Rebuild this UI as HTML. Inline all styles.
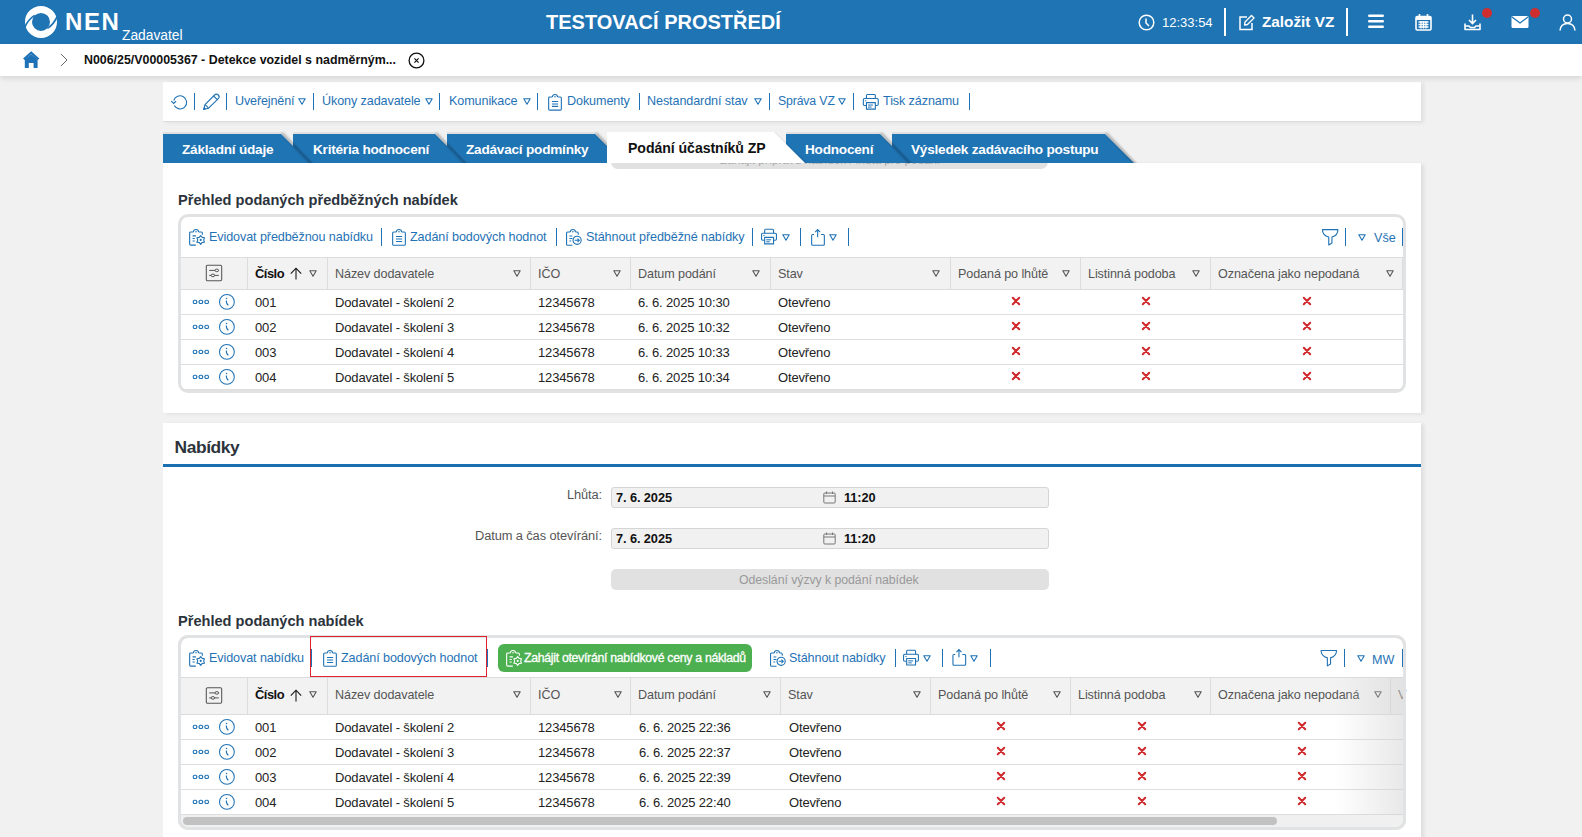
<!DOCTYPE html>
<html><head><meta charset="utf-8">
<style>
*{box-sizing:border-box}
html,body{margin:0;padding:0}
body{width:1582px;height:837px;overflow:hidden;background:#f1f1f1;font-family:"Liberation Sans",sans-serif;position:relative;color:#222}
.a{position:absolute;white-space:nowrap;line-height:1}
</style></head><body>

<div class="a" style="left:0px;top:0px;width:1582px;height:44px;background:#1f74b4;"></div>
<svg class="a" style="left:24px;top:5px;" width="34" height="34" viewBox="24 5 34 34">
<circle cx="41" cy="21.9" r="12.5" fill="none" stroke="#fff" stroke-width="7"/>
<path d="M24.6 27.6 Q28.2 19.4 34.6 15.4" fill="none" stroke="#1f74b4" stroke-width="1.7"/>
<path d="M57.4 16.2 Q53.8 24.4 47.4 28.4" fill="none" stroke="#1f74b4" stroke-width="1.7"/>
</svg>
<div class="a" style="left:65px;top:10px;font-size:24px;font-weight:bold;color:#fff;letter-spacing:1.6px;">NEN</div>
<div class="a" style="left:122px;top:29px;font-size:13.8px;font-weight:normal;color:#fff;">Zadavatel</div>
<div class="a" style="left:546px;top:12px;font-size:20px;font-weight:bold;color:#fff;letter-spacing:0px;">TESTOVACÍ PROSTŘEDÍ</div>
<svg class="a" style="left:1138px;top:14px;" width="17" height="17" viewBox="0 0 17 17"><circle cx="8.5" cy="8.5" r="7.3" fill="none" stroke="#fff" stroke-width="1.5"/><path d="M8 4.5 V9 L11 12" fill="none" stroke="#fff" stroke-width="1.5"/></svg>
<div class="a" style="left:1162px;top:16px;font-size:13px;font-weight:normal;color:#fff;">12:33:54</div>
<div class="a" style="left:1224px;top:8px;width:2px;height:28px;background:#fff;"></div>
<svg class="a" style="left:1238px;top:14px;" width="17" height="17" viewBox="0 0 17 17"><path d="M9 3 H2 V15.5 H14 V9" fill="none" stroke="#fff" stroke-width="1.5"/><path d="M6.5 11 L7 8 L13.5 1.5 L16 4 L9.5 10.5 Z" fill="none" stroke="#fff" stroke-width="1.4" stroke-linejoin="round"/></svg>
<div class="a" style="left:1262px;top:14px;font-size:15.3px;font-weight:bold;color:#fff;">Založit VZ</div>
<div class="a" style="left:1346px;top:8px;width:2px;height:28px;background:#fff;"></div>
<svg class="a" style="left:1368px;top:14px;" width="17" height="15" viewBox="0 0 17 15"><rect x="0" y="0.5" width="16" height="2.6" rx="1.3" fill="#fff"/><rect x="0" y="6" width="16" height="2.6" rx="1.3" fill="#fff"/><rect x="0" y="11.5" width="16" height="2.6" rx="1.3" fill="#fff"/></svg>
<svg class="a" style="left:1415px;top:14px;" width="17" height="17" viewBox="0 0 17 17"><rect x="1" y="2.5" width="15" height="13.5" rx="1.2" fill="none" stroke="#fff" stroke-width="1.6"/><rect x="1" y="3" width="15" height="3" fill="#fff"/><path d="M4.5 0 V4 M12.5 0 V4" stroke="#fff" stroke-width="1.6"/><path d="M3.5 8 H13.5 M3.5 10.5 H13.5 M3.5 13 H13.5" stroke="#fff" stroke-width="1.3"/><path d="M6 7 V14.5 M8.5 7 V14.5 M11 7 V14.5" stroke="#fff" stroke-width="1.3"/></svg>
<svg class="a" style="left:1464px;top:14px;" width="17" height="17" viewBox="0 0 17 17"><path d="M8.5 0.5 V9 M5 6 L8.5 9.5 L12 6" fill="none" stroke="#fff" stroke-width="1.6"/><path d="M1 9.5 V15.5 H16 V9.5 M1 12 H5 L6.5 13.5 H10.5 L12 12 H16" fill="none" stroke="#fff" stroke-width="1.6" stroke-linejoin="round"/></svg>
<div class="a" style="left:1482px;top:8px;width:10px;height:10px;border-radius:50%;background:#cf2e2e"></div>
<svg class="a" style="left:1511px;top:15px;" width="18" height="14" viewBox="0 0 18 14"><rect x="0.5" y="1" width="17" height="12" rx="1.5" fill="#fff"/><path d="M1 2 L9 8 L17 2" fill="none" stroke="#1f74b4" stroke-width="1.3"/></svg>
<div class="a" style="left:1530px;top:8px;width:10px;height:10px;border-radius:50%;background:#cf2e2e"></div>
<svg class="a" style="left:1559px;top:14px;" width="17" height="17" viewBox="0 0 17 17"><circle cx="8.5" cy="5" r="4" fill="none" stroke="#fff" stroke-width="1.5"/><path d="M1 16.5 C1.5 11.5 4.5 9.5 8.5 9.5 C12.5 9.5 15.5 11.5 16 16.5" fill="none" stroke="#fff" stroke-width="1.5"/></svg>
<div class="a" style="left:0;top:44px;width:1582px;height:32px;background:#fff;box-shadow:0 2px 6px rgba(0,0,0,.13);z-index:1"></div>
<div class="a" style="left:0;top:44px;width:1582px;height:32px;z-index:3">
<svg class="a" style="left:23px;top:7px;" width="17" height="18" viewBox="0 0 17 18"><path d="M0.8 8.2 L8.2 1.6 L15.6 8.2" fill="none" stroke="#1f72b5" stroke-width="2.2"/><path d="M1.8 8.2 L8.2 3.2 L14.6 8.2 V17 H10.6 V12 H5.8 V17 H1.8 Z" fill="#1f72b5"/></svg>
<svg class="a" style="left:60px;top:9px;" width="8" height="14" viewBox="0 0 8 14"><path d="M1 1 L7 7 L1 13" fill="none" stroke="#666" stroke-width="1"/></svg>
<div class="a" style="left:84px;top:10px;font-size:12.4px;font-weight:bold;color:#111;">N006/25/V00005367 - Detekce vozidel s nadměrným...</div>
<svg class="a" style="left:408px;top:8px;" width="17" height="17" viewBox="0 0 17 17"><circle cx="8.5" cy="8.5" r="7.4" fill="none" stroke="#111" stroke-width="1.3"/><path d="M6.4 6.4 L10.6 10.6 M10.6 6.4 L6.4 10.6" stroke="#111" stroke-width="1.15"/></svg>
</div>
<div class="a" style="left:163px;top:82px;width:1258px;height:40px;background:#fff;border-bottom:1px solid #dcdcdc;box-shadow:3px 1px 4px rgba(0,0,0,.07)"></div>
<svg class="a" style="left:166px;top:88px;" width="30" height="26" viewBox="166 88 30 26"><path d="M174.3 105.6 A6.6 6.6 0 1 0 173.7 100.6" fill="none" stroke="#1f72b5" stroke-width="1.1"/><path d="M171.3 101.1 L173.7 103.5 L176.1 101.1" fill="none" stroke="#1f72b5" stroke-width="1.2"/></svg>
<div class="a" style="left:194px;top:93px;width:1px;height:17px;background:#1f72b5;"></div>
<svg class="a" style="left:200px;top:88px;" width="26" height="26" viewBox="200 88 26 26"><path d="M203.6 109.5 L205 104.6 L214.6 95 A2.6 2.6 0 0 1 218.3 98.7 L208.6 108.2 Z" fill="none" stroke="#1f72b5" stroke-width="1.1" stroke-linejoin="round"/><path d="M213.6 96 L217.3 99.7 M205 104.6 L208.6 108.2" stroke="#1f72b5" stroke-width="1.1"/><path d="M203.4 109.7 L204.2 106.9 L206.2 108.9 Z" fill="#1f72b5"/></svg>
<div class="a" style="left:226px;top:93px;width:1px;height:17px;background:#1f72b5;"></div>
<div class="a" style="left:235px;top:95px;font-size:12.6px;font-weight:normal;color:#1f72b5;letter-spacing:-0.15px;">Uveřejnění</div>
<svg class="a" style="left:298px;top:98px;" width="8" height="7" viewBox="0 0 8 7"><path d="M0.8 0.8 H7.2 L4 6.2 Z" fill="none" stroke="#1f72b5" stroke-width="1.1" stroke-linejoin="round"/></svg>
<div class="a" style="left:313px;top:93px;width:1px;height:17px;background:#1f72b5;"></div>
<div class="a" style="left:322px;top:95px;font-size:12.6px;font-weight:normal;color:#1f72b5;letter-spacing:-0.1px;">Úkony zadavatele</div>
<svg class="a" style="left:425px;top:98px;" width="8" height="7" viewBox="0 0 8 7"><path d="M0.8 0.8 H7.2 L4 6.2 Z" fill="none" stroke="#1f72b5" stroke-width="1.1" stroke-linejoin="round"/></svg>
<div class="a" style="left:439px;top:93px;width:1px;height:17px;background:#1f72b5;"></div>
<div class="a" style="left:449px;top:95px;font-size:12.6px;font-weight:normal;color:#1f72b5;letter-spacing:-0.1px;">Komunikace</div>
<svg class="a" style="left:523px;top:98px;" width="8" height="7" viewBox="0 0 8 7"><path d="M0.8 0.8 H7.2 L4 6.2 Z" fill="none" stroke="#1f72b5" stroke-width="1.1" stroke-linejoin="round"/></svg>
<div class="a" style="left:537px;top:93px;width:1px;height:17px;background:#1f72b5;"></div>
<svg class="a" style="left:547px;top:93px" width="15" height="18" viewBox="-1.65 -1.45 15 18"><path d="M3.8 2.5 H1.1 Q0 2.5 0 3.6 V14.6 Q0 15.7 1.1 15.7 H11.6 Q12.7 15.7 12.7 14.6 V3.6 Q12.7 2.5 11.6 2.5 H8.9" fill="none" stroke="#1f72b5" stroke-width="1.1"/><path d="M3.8 2.5 C3.8 0.6 4.9 0 6.35 0 C7.8 0 8.9 0.6 8.9 2.5" fill="none" stroke="#1f72b5" stroke-width="1.1"/><circle cx="6.35" cy="2.3" r="0.75" fill="#1f72b5"/><path d="M3.3 7 H9.5 M3.3 9.45 H9.5 M3.3 11.9 H9.5" stroke="#1f72b5" stroke-width="1.05"/></svg>
<div class="a" style="left:567px;top:95px;font-size:12.6px;font-weight:normal;color:#1f72b5;letter-spacing:-0.1px;">Dokumenty</div>
<div class="a" style="left:639px;top:93px;width:1px;height:17px;background:#1f72b5;"></div>
<div class="a" style="left:647px;top:95px;font-size:12.6px;font-weight:normal;color:#1f72b5;letter-spacing:-0.1px;">Nestandardní stav</div>
<svg class="a" style="left:754px;top:98px;" width="8" height="7" viewBox="0 0 8 7"><path d="M0.8 0.8 H7.2 L4 6.2 Z" fill="none" stroke="#1f72b5" stroke-width="1.1" stroke-linejoin="round"/></svg>
<div class="a" style="left:769px;top:93px;width:1px;height:17px;background:#1f72b5;"></div>
<div class="a" style="left:778px;top:95px;font-size:12.3px;font-weight:normal;color:#1f72b5;letter-spacing:-0.15px;">Správa VZ</div>
<svg class="a" style="left:838px;top:98px;" width="8" height="7" viewBox="0 0 8 7"><path d="M0.8 0.8 H7.2 L4 6.2 Z" fill="none" stroke="#1f72b5" stroke-width="1.1" stroke-linejoin="round"/></svg>
<div class="a" style="left:853px;top:93px;width:1px;height:17px;background:#1f72b5;"></div>
<svg class="a" style="left:862px;top:93px" width="18" height="18" viewBox="-1.35 -1.45 18 18"><path d="M3.1 4 V1 Q3.1 0 4.1 0 H11 Q12 0 12 1 V4" fill="none" stroke="#1f72b5" stroke-width="1.1"/><path d="M3.1 11 H1.2 Q0 11 0 9.8 V5.2 Q0 4 1.2 4 H13.7 Q14.9 4 14.9 5.2 V9.8 Q14.9 11 13.7 11 H12" fill="none" stroke="#1f72b5" stroke-width="1.1"/><path d="M3.1 8.2 H12 V14.7 H3.1 Z" fill="#fff" stroke="#1f72b5" stroke-width="1.1" stroke-linejoin="round"/><path d="M4.7 10.6 H9.6 M4.7 12.6 H8.2" stroke="#1f72b5" stroke-width="1"/><path d="M1.8 6.3 H3" stroke="#1f72b5" stroke-width="1"/></svg>
<div class="a" style="left:883px;top:95px;font-size:12.6px;font-weight:normal;color:#1f72b5;letter-spacing:-0.1px;">Tisk záznamu</div>
<div class="a" style="left:969px;top:93px;width:1px;height:17px;background:#1f72b5;"></div>
<div class="a" style="left:163px;top:163px;width:1258px;height:250px;background:#fff;box-shadow:3px 1px 4px rgba(0,0,0,.08)"></div>
<div class="a" style="left:611px;top:150px;width:437px;height:19px;background:#e1e1e1;border-radius:0 0 7px 7px;overflow:hidden"><div class="a" style="left:109px;top:4px;font-size:11.7px;color:#a8a8a8">Zahájit přípravu nabídek / lhůta pro podání</div></div>
<svg class="a" style="left:0;top:0" width="1582" height="180" viewBox="0 0 1582 180"><defs><filter id="tb" x="-50%" y="-50%" width="200%" height="200%"><feGaussianBlur stdDeviation="1.1"/></filter><clipPath id="tc"><rect x="0" y="120" width="1582" height="43"/></clipPath></defs><polygon points="892,132 1106,132 1137,163 892,163" fill="rgba(0,0,0,0.07)"/><polygon points="892,134 1105,134 1134,163 892,163" fill="#1f74b4"/><path d="M1106.2,133 L1136.2,165" stroke="rgba(0,0,0,0.2)" stroke-width="2.6" filter="url(#tb)" clip-path="url(#tc)"/><polygon points="786,132 881,132 912,163 786,163" fill="rgba(0,0,0,0.07)"/><polygon points="786,134 880,134 909,163 786,163" fill="#1f74b4"/><path d="M881.2,133 L911.2,165" stroke="rgba(0,0,0,0.2)" stroke-width="2.6" filter="url(#tb)" clip-path="url(#tc)"/><polygon points="447,132 596,132 627,163 447,163" fill="rgba(0,0,0,0.07)"/><polygon points="447,134 595,134 624,163 447,163" fill="#1f74b4"/><path d="M596.2,133 L626.2,165" stroke="rgba(0,0,0,0.2)" stroke-width="2.6" filter="url(#tb)" clip-path="url(#tc)"/><polygon points="293,132 436,132 467,163 293,163" fill="rgba(0,0,0,0.07)"/><polygon points="293,134 435,134 464,163 293,163" fill="#1f74b4"/><path d="M436.2,133 L466.2,165" stroke="rgba(0,0,0,0.2)" stroke-width="2.6" filter="url(#tb)" clip-path="url(#tc)"/><polygon points="163,132 282,132 313,163 163,163" fill="rgba(0,0,0,0.07)"/><polygon points="163,134 281,134 310,163 163,163" fill="#1f74b4"/><path d="M282.2,133 L312.2,165" stroke="rgba(0,0,0,0.2)" stroke-width="2.6" filter="url(#tb)" clip-path="url(#tc)"/><polygon points="607,132 775,132 808,163 607,163" fill="rgba(0,0,0,0.06)"/><polygon points="607,132 774,132 805,163 607,163" fill="#fff"/></svg>
<div class="a" style="left:182px;top:143px;font-size:13.6px;font-weight:bold;color:#fff;letter-spacing:-0.22px;">Základní údaje</div>
<div class="a" style="left:313px;top:143px;font-size:13.6px;font-weight:bold;color:#fff;letter-spacing:-0.22px;">Kritéria hodnocení</div>
<div class="a" style="left:466px;top:143px;font-size:13.6px;font-weight:bold;color:#fff;letter-spacing:-0.22px;">Zadávací podmínky</div>
<div class="a" style="left:805px;top:143px;font-size:13.6px;font-weight:bold;color:#fff;letter-spacing:-0.22px;">Hodnocení</div>
<div class="a" style="left:911px;top:143px;font-size:13.6px;font-weight:bold;color:#fff;letter-spacing:-0.22px;">Výsledek zadávacího postupu</div>
<div class="a" style="left:628px;top:141px;font-size:14.1px;font-weight:bold;color:#111;letter-spacing:-0.05px;">Podání účastníků ZP</div>
<div class="a" style="left:178px;top:193px;font-size:14.6px;font-weight:bold;color:#2c333b;">Přehled podaných předběžných nabídek</div>
<div class="a" style="left:178px;top:214px;width:1228px;height:179px;border:3px solid #e1e2e3;border-radius:10px;background:#fff"></div>
<svg class="a" style="left:188px;top:228px" width="18" height="18" viewBox="-1.65 -1.45 18 18"><path d="M3.8 2.5 H1.1 Q0 2.5 0 3.6 V14.6 Q0 15.7 1.1 15.7 H6.2" fill="none" stroke="#1f72b5" stroke-width="1.1"/><path d="M8.9 2.5 H11.6 Q12.7 2.5 12.7 3.6 V5.2" fill="none" stroke="#1f72b5" stroke-width="1.1"/><path d="M3.8 2.5 C3.8 0.6 4.9 0 6.35 0 C7.8 0 8.9 0.6 8.9 2.5" fill="none" stroke="#1f72b5" stroke-width="1.1"/><circle cx="6.35" cy="2.3" r="0.75" fill="#1f72b5"/><path d="M2.9 6.4 H6.3 M2.9 9 H5.1 M2.9 11.6 H5.1" stroke="#1f72b5" stroke-width="1.05"/><polygon points="11.05,6.05 12.53,7.90 14.86,8.25 14.00,10.45 14.86,12.65 12.53,13.00 11.05,14.85 9.58,13.00 7.24,12.65 8.10,10.45 7.24,8.25 9.57,7.90" fill="#fff" stroke="#1f72b5" stroke-width="1.1" stroke-linejoin="round"/><circle cx="11.05" cy="10.45" r="1.05" fill="#1f72b5"/></svg>
<div class="a" style="left:209px;top:231px;font-size:12.6px;font-weight:normal;color:#1f72b5;letter-spacing:-0.1px;">Evidovat předběžnou nabídku</div>
<div class="a" style="left:381px;top:228px;width:1px;height:18px;background:#1f72b5;"></div>
<svg class="a" style="left:391px;top:228px" width="15" height="18" viewBox="-1.65 -1.55 15 18"><path d="M3.8 2.5 H1.1 Q0 2.5 0 3.6 V14.6 Q0 15.7 1.1 15.7 H11.6 Q12.7 15.7 12.7 14.6 V3.6 Q12.7 2.5 11.6 2.5 H8.9" fill="none" stroke="#1f72b5" stroke-width="1.1"/><path d="M3.8 2.5 C3.8 0.6 4.9 0 6.35 0 C7.8 0 8.9 0.6 8.9 2.5" fill="none" stroke="#1f72b5" stroke-width="1.1"/><circle cx="6.35" cy="2.3" r="0.75" fill="#1f72b5"/><path d="M3.3 7 H9.5 M3.3 9.45 H9.5 M3.3 11.9 H9.5" stroke="#1f72b5" stroke-width="1.05"/></svg>
<div class="a" style="left:410px;top:231px;font-size:12.6px;font-weight:normal;color:#1f72b5;letter-spacing:-0.1px;">Zadání bodových hodnot</div>
<div class="a" style="left:556px;top:228px;width:1px;height:18px;background:#1f72b5;"></div>
<svg class="a" style="left:565px;top:228px" width="18" height="18" viewBox="-1.55 -1.55 18 18"><path d="M3.8 2.5 H1.1 Q0 2.5 0 3.6 V14.6 Q0 15.7 1.1 15.7 H5.9" fill="none" stroke="#1f72b5" stroke-width="1.1"/><path d="M8.9 2.5 H10.6 Q11.7 2.5 11.7 3.6 V5.2" fill="none" stroke="#1f72b5" stroke-width="1.1"/><path d="M3.8 2.5 C3.8 0.6 4.9 0 6.35 0 C7.8 0 8.9 0.6 8.9 2.5" fill="none" stroke="#1f72b5" stroke-width="1.1"/><circle cx="6.35" cy="2.3" r="0.75" fill="#1f72b5"/><path d="M2.9 6.45 H5.8 M2.9 8.9 H5.8 M2.9 11.35 H4.6" stroke="#1f72b5" stroke-width="1.05"/><circle cx="10.55" cy="10.75" r="4.1" fill="#fff" stroke="#1f72b5" stroke-width="1.1"/><path d="M8.2 10.75 H12.6 M10.9 9 L12.7 10.75 L10.9 12.5" fill="none" stroke="#1f72b5" stroke-width="1.1"/></svg>
<div class="a" style="left:586px;top:231px;font-size:12.6px;font-weight:normal;color:#1f72b5;letter-spacing:-0.1px;">Stáhnout předběžné nabídky</div>
<div class="a" style="left:752px;top:228px;width:1px;height:18px;background:#1f72b5;"></div>
<svg class="a" style="left:760px;top:228px" width="18" height="18" viewBox="-1.55 -1.20 18 18"><path d="M3.1 4 V1 Q3.1 0 4.1 0 H11 Q12 0 12 1 V4" fill="none" stroke="#1f72b5" stroke-width="1.1"/><path d="M3.1 11 H1.2 Q0 11 0 9.8 V5.2 Q0 4 1.2 4 H13.7 Q14.9 4 14.9 5.2 V9.8 Q14.9 11 13.7 11 H12" fill="none" stroke="#1f72b5" stroke-width="1.1"/><path d="M3.1 8.2 H12 V14.7 H3.1 Z" fill="#fff" stroke="#1f72b5" stroke-width="1.1" stroke-linejoin="round"/><path d="M4.7 10.6 H9.6 M4.7 12.6 H8.2" stroke="#1f72b5" stroke-width="1"/><path d="M1.8 6.3 H3" stroke="#1f72b5" stroke-width="1"/></svg>
<svg class="a" style="left:782px;top:234px;" width="8" height="7" viewBox="0 0 8 7"><path d="M0.8 0.8 H7.2 L4 6.2 Z" fill="none" stroke="#1f72b5" stroke-width="1.1" stroke-linejoin="round"/></svg>
<div class="a" style="left:800px;top:228px;width:1px;height:18px;background:#1f72b5;"></div>
<svg class="a" style="left:810px;top:228px" width="16" height="18" viewBox="-1.65 -1.55 16 18"><path d="M2.3 4.9 H1 Q0 4.9 0 5.9 V14.7 Q0 15.7 1 15.7 H11.7 Q12.7 15.7 12.7 14.7 V5.9 Q12.7 4.9 11.7 4.9 H9.4" fill="none" stroke="#1f72b5" stroke-width="1.1"/><path d="M6 0.3 V7.6 M3.5 2.6 L6 0.1 L8.5 2.6" fill="none" stroke="#1f72b5" stroke-width="1.1"/></svg>
<svg class="a" style="left:829px;top:234px;" width="8" height="7" viewBox="0 0 8 7"><path d="M0.8 0.8 H7.2 L4 6.2 Z" fill="none" stroke="#1f72b5" stroke-width="1.1" stroke-linejoin="round"/></svg>
<div class="a" style="left:848px;top:228px;width:1px;height:18px;background:#1f72b5;"></div>
<svg class="a" style="left:1321px;top:228px" width="18" height="18" viewBox="-1.45 -1.65 18 18"><path d="M0 0 H15.5 Q15.5 5.6 9.5 7.3 V13.4 L6.3 15.3 V7.3 Q0 5.6 0 0 Z" fill="none" stroke="#1f72b5" stroke-width="1.1" stroke-linejoin="round"/></svg>
<div class="a" style="left:1345px;top:228px;width:1px;height:18px;background:#1f72b5;"></div>
<svg class="a" style="left:1358px;top:234px;" width="8" height="7" viewBox="0 0 8 7"><path d="M0.8 0.8 H7.2 L4 6.2 Z" fill="none" stroke="#1f72b5" stroke-width="1.1" stroke-linejoin="round"/></svg>
<div class="a" style="left:1374px;top:232px;font-size:12.6px;font-weight:normal;color:#1f72b5;">Vše</div>
<div class="a" style="left:1402px;top:228px;width:1px;height:18px;background:#1f72b5;"></div>
<div class="a" style="left:181px;top:257px;width:1222px;height:32px;background:#f2f2f2;"></div>
<div class="a" style="left:181px;top:257px;width:1222px;height:1px;background:#dcdcdc;"></div>
<div class="a" style="left:181px;top:289px;width:1222px;height:1px;background:#dcdcdc;"></div>
<div class="a" style="left:247px;top:257px;width:1px;height:32px;background:#dcdcdc;"></div>
<div class="a" style="left:327px;top:257px;width:1px;height:32px;background:#dcdcdc;"></div>
<div class="a" style="left:530px;top:257px;width:1px;height:32px;background:#dcdcdc;"></div>
<div class="a" style="left:630px;top:257px;width:1px;height:32px;background:#dcdcdc;"></div>
<div class="a" style="left:770px;top:257px;width:1px;height:32px;background:#dcdcdc;"></div>
<div class="a" style="left:950px;top:257px;width:1px;height:32px;background:#dcdcdc;"></div>
<div class="a" style="left:1080px;top:257px;width:1px;height:32px;background:#dcdcdc;"></div>
<div class="a" style="left:1210px;top:257px;width:1px;height:32px;background:#dcdcdc;"></div>
<div class="a" style="left:1402px;top:257px;width:1px;height:32px;background:#dcdcdc;"></div>
<svg class="a" style="left:205px;top:264px" width="18" height="18" viewBox="-1.00 -1.00 18 18"><rect x="0.3" y="0.3" width="15.4" height="15.4" rx="1.2" fill="none" stroke="#555" stroke-width="1.05"/><path d="M3.2 5.4 H12.6 M3.2 10.4 H12.8" stroke="#555" stroke-width="1"/><ellipse cx="10.8" cy="5.4" rx="1.8" ry="1.3" fill="#f2f2f2" stroke="#555" stroke-width="1"/><ellipse cx="6.9" cy="10.4" rx="1.8" ry="1.3" fill="#f2f2f2" stroke="#555" stroke-width="1"/></svg>
<div class="a" style="left:255px;top:268px;font-size:12.9px;font-weight:bold;color:#111;letter-spacing:-0.5px;">Číslo</div>
<svg class="a" style="left:290px;top:267px;" width="12" height="13" viewBox="0 0 12 13"><path d="M6 12.5 V1.5 M0.8 6.6 L6 1.2 L11.2 6.6" fill="none" stroke="#111" stroke-width="1.05"/></svg>
<svg class="a" style="left:309px;top:270px;" width="8" height="7" viewBox="0 0 8 7"><path d="M0.8 0.8 H7.2 L4 6.2 Z" fill="none" stroke="#555" stroke-width="1.1" stroke-linejoin="round"/></svg>
<div class="a" style="left:335px;top:268px;font-size:12.6px;font-weight:normal;color:#555;letter-spacing:-0.1px;">Název dodavatele</div>
<svg class="a" style="left:513px;top:270px;" width="8" height="7" viewBox="0 0 8 7"><path d="M0.8 0.8 H7.2 L4 6.2 Z" fill="none" stroke="#555" stroke-width="1.1" stroke-linejoin="round"/></svg>
<div class="a" style="left:538px;top:268px;font-size:12.6px;font-weight:normal;color:#555;letter-spacing:-0.1px;">IČO</div>
<svg class="a" style="left:613px;top:270px;" width="8" height="7" viewBox="0 0 8 7"><path d="M0.8 0.8 H7.2 L4 6.2 Z" fill="none" stroke="#555" stroke-width="1.1" stroke-linejoin="round"/></svg>
<div class="a" style="left:638px;top:268px;font-size:12.6px;font-weight:normal;color:#555;letter-spacing:-0.1px;">Datum podání</div>
<svg class="a" style="left:752px;top:270px;" width="8" height="7" viewBox="0 0 8 7"><path d="M0.8 0.8 H7.2 L4 6.2 Z" fill="none" stroke="#555" stroke-width="1.1" stroke-linejoin="round"/></svg>
<div class="a" style="left:778px;top:268px;font-size:12.6px;font-weight:normal;color:#555;letter-spacing:-0.1px;">Stav</div>
<svg class="a" style="left:932px;top:270px;" width="8" height="7" viewBox="0 0 8 7"><path d="M0.8 0.8 H7.2 L4 6.2 Z" fill="none" stroke="#555" stroke-width="1.1" stroke-linejoin="round"/></svg>
<div class="a" style="left:958px;top:268px;font-size:12.6px;font-weight:normal;color:#555;letter-spacing:-0.1px;">Podaná po lhůtě</div>
<svg class="a" style="left:1062px;top:270px;" width="8" height="7" viewBox="0 0 8 7"><path d="M0.8 0.8 H7.2 L4 6.2 Z" fill="none" stroke="#555" stroke-width="1.1" stroke-linejoin="round"/></svg>
<div class="a" style="left:1088px;top:268px;font-size:12.6px;font-weight:normal;color:#555;letter-spacing:-0.1px;">Listinná podoba</div>
<svg class="a" style="left:1192px;top:270px;" width="8" height="7" viewBox="0 0 8 7"><path d="M0.8 0.8 H7.2 L4 6.2 Z" fill="none" stroke="#555" stroke-width="1.1" stroke-linejoin="round"/></svg>
<div class="a" style="left:1218px;top:268px;font-size:12.6px;font-weight:normal;color:#555;letter-spacing:-0.1px;">Označena jako nepodaná</div>
<svg class="a" style="left:1386px;top:270px;" width="8" height="7" viewBox="0 0 8 7"><path d="M0.8 0.8 H7.2 L4 6.2 Z" fill="none" stroke="#555" stroke-width="1.1" stroke-linejoin="round"/></svg>
<div class="a" style="left:181px;top:314px;width:1222px;height:1px;background:#dedede;"></div>
<svg class="a" style="left:191px;top:297px" width="18" height="8" viewBox="-1.95 -1.90 18 8"><rect x="0.3" y="1.3" width="3.5" height="3.3" rx="1.3" fill="none" stroke="#1f72b5" stroke-width="1.1"/><rect x="6.15" y="1.3" width="3.5" height="3.3" rx="1.3" fill="none" stroke="#1f72b5" stroke-width="1.1"/><rect x="12" y="1.3" width="3.5" height="3.3" rx="1.3" fill="none" stroke="#1f72b5" stroke-width="1.1"/><path d="M3.8 2.95 H6.15 M9.65 2.95 H12" stroke="#1f72b5" stroke-width="0.5" opacity="0.6"/></svg>
<svg class="a" style="left:217px;top:292px" width="18" height="18" viewBox="-1.90 -1.90 18 18"><circle cx="8" cy="8" r="7.4" fill="none" stroke="#1f72b5" stroke-width="1.05"/><circle cx="7.6" cy="4.5" r="0.75" fill="#1f72b5"/><path d="M7.4 6.7 Q7.4 10.4 9.5 11.4" fill="none" stroke="#1f72b5" stroke-width="1.1"/></svg>
<div class="a" style="left:255px;top:296px;font-size:13px;font-weight:normal;color:#222;letter-spacing:-0.15px;">001</div>
<div class="a" style="left:335px;top:296px;font-size:13px;font-weight:normal;color:#222;letter-spacing:-0.15px;">Dodavatel - školení 2</div>
<div class="a" style="left:538px;top:296px;font-size:13px;font-weight:normal;color:#222;letter-spacing:-0.15px;">12345678</div>
<div class="a" style="left:638px;top:296px;font-size:13px;font-weight:normal;color:#222;letter-spacing:-0.15px;">6. 6. 2025 10:30</div>
<div class="a" style="left:778px;top:296px;font-size:13px;font-weight:normal;color:#222;letter-spacing:-0.15px;">Otevřeno</div>
<svg class="a" style="left:1010.5px;top:296.0px;" width="10" height="10" viewBox="0 0 10 10"><path d="M1.8 1.8 L8.2 8.2 M8.2 1.8 L1.8 8.2" stroke="#d0282c" stroke-width="2" stroke-linecap="round"/></svg>
<svg class="a" style="left:1140.5px;top:296.0px;" width="10" height="10" viewBox="0 0 10 10"><path d="M1.8 1.8 L8.2 8.2 M8.2 1.8 L1.8 8.2" stroke="#d0282c" stroke-width="2" stroke-linecap="round"/></svg>
<svg class="a" style="left:1302px;top:296.0px;" width="10" height="10" viewBox="0 0 10 10"><path d="M1.8 1.8 L8.2 8.2 M8.2 1.8 L1.8 8.2" stroke="#d0282c" stroke-width="2" stroke-linecap="round"/></svg>
<div class="a" style="left:181px;top:339px;width:1222px;height:1px;background:#dedede;"></div>
<svg class="a" style="left:191px;top:322px" width="18" height="8" viewBox="-1.95 -1.90 18 8"><rect x="0.3" y="1.3" width="3.5" height="3.3" rx="1.3" fill="none" stroke="#1f72b5" stroke-width="1.1"/><rect x="6.15" y="1.3" width="3.5" height="3.3" rx="1.3" fill="none" stroke="#1f72b5" stroke-width="1.1"/><rect x="12" y="1.3" width="3.5" height="3.3" rx="1.3" fill="none" stroke="#1f72b5" stroke-width="1.1"/><path d="M3.8 2.95 H6.15 M9.65 2.95 H12" stroke="#1f72b5" stroke-width="0.5" opacity="0.6"/></svg>
<svg class="a" style="left:217px;top:317px" width="18" height="18" viewBox="-1.90 -1.90 18 18"><circle cx="8" cy="8" r="7.4" fill="none" stroke="#1f72b5" stroke-width="1.05"/><circle cx="7.6" cy="4.5" r="0.75" fill="#1f72b5"/><path d="M7.4 6.7 Q7.4 10.4 9.5 11.4" fill="none" stroke="#1f72b5" stroke-width="1.1"/></svg>
<div class="a" style="left:255px;top:321px;font-size:13px;font-weight:normal;color:#222;letter-spacing:-0.15px;">002</div>
<div class="a" style="left:335px;top:321px;font-size:13px;font-weight:normal;color:#222;letter-spacing:-0.15px;">Dodavatel - školení 3</div>
<div class="a" style="left:538px;top:321px;font-size:13px;font-weight:normal;color:#222;letter-spacing:-0.15px;">12345678</div>
<div class="a" style="left:638px;top:321px;font-size:13px;font-weight:normal;color:#222;letter-spacing:-0.15px;">6. 6. 2025 10:32</div>
<div class="a" style="left:778px;top:321px;font-size:13px;font-weight:normal;color:#222;letter-spacing:-0.15px;">Otevřeno</div>
<svg class="a" style="left:1010.5px;top:321.0px;" width="10" height="10" viewBox="0 0 10 10"><path d="M1.8 1.8 L8.2 8.2 M8.2 1.8 L1.8 8.2" stroke="#d0282c" stroke-width="2" stroke-linecap="round"/></svg>
<svg class="a" style="left:1140.5px;top:321.0px;" width="10" height="10" viewBox="0 0 10 10"><path d="M1.8 1.8 L8.2 8.2 M8.2 1.8 L1.8 8.2" stroke="#d0282c" stroke-width="2" stroke-linecap="round"/></svg>
<svg class="a" style="left:1302px;top:321.0px;" width="10" height="10" viewBox="0 0 10 10"><path d="M1.8 1.8 L8.2 8.2 M8.2 1.8 L1.8 8.2" stroke="#d0282c" stroke-width="2" stroke-linecap="round"/></svg>
<div class="a" style="left:181px;top:364px;width:1222px;height:1px;background:#dedede;"></div>
<svg class="a" style="left:191px;top:347px" width="18" height="8" viewBox="-1.95 -1.90 18 8"><rect x="0.3" y="1.3" width="3.5" height="3.3" rx="1.3" fill="none" stroke="#1f72b5" stroke-width="1.1"/><rect x="6.15" y="1.3" width="3.5" height="3.3" rx="1.3" fill="none" stroke="#1f72b5" stroke-width="1.1"/><rect x="12" y="1.3" width="3.5" height="3.3" rx="1.3" fill="none" stroke="#1f72b5" stroke-width="1.1"/><path d="M3.8 2.95 H6.15 M9.65 2.95 H12" stroke="#1f72b5" stroke-width="0.5" opacity="0.6"/></svg>
<svg class="a" style="left:217px;top:342px" width="18" height="18" viewBox="-1.90 -1.90 18 18"><circle cx="8" cy="8" r="7.4" fill="none" stroke="#1f72b5" stroke-width="1.05"/><circle cx="7.6" cy="4.5" r="0.75" fill="#1f72b5"/><path d="M7.4 6.7 Q7.4 10.4 9.5 11.4" fill="none" stroke="#1f72b5" stroke-width="1.1"/></svg>
<div class="a" style="left:255px;top:346px;font-size:13px;font-weight:normal;color:#222;letter-spacing:-0.15px;">003</div>
<div class="a" style="left:335px;top:346px;font-size:13px;font-weight:normal;color:#222;letter-spacing:-0.15px;">Dodavatel - školení 4</div>
<div class="a" style="left:538px;top:346px;font-size:13px;font-weight:normal;color:#222;letter-spacing:-0.15px;">12345678</div>
<div class="a" style="left:638px;top:346px;font-size:13px;font-weight:normal;color:#222;letter-spacing:-0.15px;">6. 6. 2025 10:33</div>
<div class="a" style="left:778px;top:346px;font-size:13px;font-weight:normal;color:#222;letter-spacing:-0.15px;">Otevřeno</div>
<svg class="a" style="left:1010.5px;top:346.0px;" width="10" height="10" viewBox="0 0 10 10"><path d="M1.8 1.8 L8.2 8.2 M8.2 1.8 L1.8 8.2" stroke="#d0282c" stroke-width="2" stroke-linecap="round"/></svg>
<svg class="a" style="left:1140.5px;top:346.0px;" width="10" height="10" viewBox="0 0 10 10"><path d="M1.8 1.8 L8.2 8.2 M8.2 1.8 L1.8 8.2" stroke="#d0282c" stroke-width="2" stroke-linecap="round"/></svg>
<svg class="a" style="left:1302px;top:346.0px;" width="10" height="10" viewBox="0 0 10 10"><path d="M1.8 1.8 L8.2 8.2 M8.2 1.8 L1.8 8.2" stroke="#d0282c" stroke-width="2" stroke-linecap="round"/></svg>
<div class="a" style="left:181px;top:389px;width:1222px;height:1px;background:#dedede;"></div>
<svg class="a" style="left:191px;top:372px" width="18" height="8" viewBox="-1.95 -1.90 18 8"><rect x="0.3" y="1.3" width="3.5" height="3.3" rx="1.3" fill="none" stroke="#1f72b5" stroke-width="1.1"/><rect x="6.15" y="1.3" width="3.5" height="3.3" rx="1.3" fill="none" stroke="#1f72b5" stroke-width="1.1"/><rect x="12" y="1.3" width="3.5" height="3.3" rx="1.3" fill="none" stroke="#1f72b5" stroke-width="1.1"/><path d="M3.8 2.95 H6.15 M9.65 2.95 H12" stroke="#1f72b5" stroke-width="0.5" opacity="0.6"/></svg>
<svg class="a" style="left:217px;top:367px" width="18" height="18" viewBox="-1.90 -1.90 18 18"><circle cx="8" cy="8" r="7.4" fill="none" stroke="#1f72b5" stroke-width="1.05"/><circle cx="7.6" cy="4.5" r="0.75" fill="#1f72b5"/><path d="M7.4 6.7 Q7.4 10.4 9.5 11.4" fill="none" stroke="#1f72b5" stroke-width="1.1"/></svg>
<div class="a" style="left:255px;top:371px;font-size:13px;font-weight:normal;color:#222;letter-spacing:-0.15px;">004</div>
<div class="a" style="left:335px;top:371px;font-size:13px;font-weight:normal;color:#222;letter-spacing:-0.15px;">Dodavatel - školení 5</div>
<div class="a" style="left:538px;top:371px;font-size:13px;font-weight:normal;color:#222;letter-spacing:-0.15px;">12345678</div>
<div class="a" style="left:638px;top:371px;font-size:13px;font-weight:normal;color:#222;letter-spacing:-0.15px;">6. 6. 2025 10:34</div>
<div class="a" style="left:778px;top:371px;font-size:13px;font-weight:normal;color:#222;letter-spacing:-0.15px;">Otevřeno</div>
<svg class="a" style="left:1010.5px;top:371.0px;" width="10" height="10" viewBox="0 0 10 10"><path d="M1.8 1.8 L8.2 8.2 M8.2 1.8 L1.8 8.2" stroke="#d0282c" stroke-width="2" stroke-linecap="round"/></svg>
<svg class="a" style="left:1140.5px;top:371.0px;" width="10" height="10" viewBox="0 0 10 10"><path d="M1.8 1.8 L8.2 8.2 M8.2 1.8 L1.8 8.2" stroke="#d0282c" stroke-width="2" stroke-linecap="round"/></svg>
<svg class="a" style="left:1302px;top:371.0px;" width="10" height="10" viewBox="0 0 10 10"><path d="M1.8 1.8 L8.2 8.2 M8.2 1.8 L1.8 8.2" stroke="#d0282c" stroke-width="2" stroke-linecap="round"/></svg>
<div class="a" style="left:163px;top:423px;width:1258px;height:420px;background:#fff;box-shadow:3px 1px 4px rgba(0,0,0,.08)"></div>
<div class="a" style="left:174.5px;top:439px;font-size:17.4px;font-weight:bold;color:#2c333b;letter-spacing:-0.4px;">Nabídky</div>
<div class="a" style="left:163px;top:464px;width:1258px;height:3px;background:#1a6fb1;"></div>
<div class="a" style="left:400px;width:202px;text-align:right;top:489px;font-size:12.85px;color:#555;letter-spacing:-0.1px">Lhůta:</div>
<div class="a" style="left:400px;width:202px;text-align:right;top:530px;font-size:12.85px;color:#555;letter-spacing:-0.1px">Datum a čas otevírání:</div>
<div class="a" style="left:611px;top:487px;width:438px;height:21px;background:#f1f1f1;border:1px solid #d5d5d5;border-radius:3px"></div>
<div class="a" style="left:616px;top:492px;font-size:12.8px;font-weight:bold;color:#111;letter-spacing:-0.1px;">7. 6. 2025</div>
<svg class="a" style="left:823px;top:491px;" width="13" height="13" viewBox="0 0 13 13"><rect x="0.8" y="2" width="11.4" height="10" rx="1" fill="none" stroke="#777" stroke-width="1"/><path d="M0.8 5 H12.2 M3.5 0.5 V3 M9.5 0.5 V3" stroke="#777" stroke-width="1"/></svg>
<div class="a" style="left:844px;top:492px;font-size:12.8px;font-weight:bold;color:#111;letter-spacing:-0.1px;">11:20</div>
<div class="a" style="left:611px;top:528px;width:438px;height:21px;background:#f1f1f1;border:1px solid #d5d5d5;border-radius:3px"></div>
<div class="a" style="left:616px;top:533px;font-size:12.8px;font-weight:bold;color:#111;letter-spacing:-0.1px;">7. 6. 2025</div>
<svg class="a" style="left:823px;top:532px;" width="13" height="13" viewBox="0 0 13 13"><rect x="0.8" y="2" width="11.4" height="10" rx="1" fill="none" stroke="#777" stroke-width="1"/><path d="M0.8 5 H12.2 M3.5 0.5 V3 M9.5 0.5 V3" stroke="#777" stroke-width="1"/></svg>
<div class="a" style="left:844px;top:533px;font-size:12.8px;font-weight:bold;color:#111;letter-spacing:-0.1px;">11:20</div>
<div class="a" style="left:611px;top:569px;width:438px;height:21px;background:#e1e1e1;border-radius:5px"></div>
<div class="a" style="left:739px;top:574px;font-size:12.3px;font-weight:normal;color:#999;letter-spacing:-0.05px;">Odeslání výzvy k podání nabídek</div>
<div class="a" style="left:178px;top:614px;font-size:14.6px;font-weight:bold;color:#2c333b;">Přehled podaných nabídek</div>
<div class="a" style="left:178px;top:635px;width:1228px;height:195px;border:3px solid #e1e2e3;border-radius:10px;background:#fff"></div>
<svg class="a" style="left:188px;top:649px" width="18" height="18" viewBox="-1.65 -1.45 18 18"><path d="M3.8 2.5 H1.1 Q0 2.5 0 3.6 V14.6 Q0 15.7 1.1 15.7 H6.2" fill="none" stroke="#1f72b5" stroke-width="1.1"/><path d="M8.9 2.5 H11.6 Q12.7 2.5 12.7 3.6 V5.2" fill="none" stroke="#1f72b5" stroke-width="1.1"/><path d="M3.8 2.5 C3.8 0.6 4.9 0 6.35 0 C7.8 0 8.9 0.6 8.9 2.5" fill="none" stroke="#1f72b5" stroke-width="1.1"/><circle cx="6.35" cy="2.3" r="0.75" fill="#1f72b5"/><path d="M2.9 6.4 H6.3 M2.9 9 H5.1 M2.9 11.6 H5.1" stroke="#1f72b5" stroke-width="1.05"/><polygon points="11.05,6.05 12.53,7.90 14.86,8.25 14.00,10.45 14.86,12.65 12.53,13.00 11.05,14.85 9.58,13.00 7.24,12.65 8.10,10.45 7.24,8.25 9.57,7.90" fill="#fff" stroke="#1f72b5" stroke-width="1.1" stroke-linejoin="round"/><circle cx="11.05" cy="10.45" r="1.05" fill="#1f72b5"/></svg>
<div class="a" style="left:209px;top:652px;font-size:12.6px;font-weight:normal;color:#1f72b5;letter-spacing:-0.1px;">Evidovat nabídku</div>
<div class="a" style="left:311px;top:649px;width:1px;height:18px;background:#1f72b5;"></div>
<svg class="a" style="left:322px;top:649px" width="15" height="18" viewBox="-1.65 -1.55 15 18"><path d="M3.8 2.5 H1.1 Q0 2.5 0 3.6 V14.6 Q0 15.7 1.1 15.7 H11.6 Q12.7 15.7 12.7 14.6 V3.6 Q12.7 2.5 11.6 2.5 H8.9" fill="none" stroke="#1f72b5" stroke-width="1.1"/><path d="M3.8 2.5 C3.8 0.6 4.9 0 6.35 0 C7.8 0 8.9 0.6 8.9 2.5" fill="none" stroke="#1f72b5" stroke-width="1.1"/><circle cx="6.35" cy="2.3" r="0.75" fill="#1f72b5"/><path d="M3.3 7 H9.5 M3.3 9.45 H9.5 M3.3 11.9 H9.5" stroke="#1f72b5" stroke-width="1.05"/></svg>
<div class="a" style="left:341px;top:652px;font-size:12.6px;font-weight:normal;color:#1f72b5;letter-spacing:-0.1px;">Zadání bodových hodnot</div>
<div class="a" style="left:487px;top:649px;width:1px;height:18px;background:#1f72b5;"></div>
<div class="a" style="left:498px;top:644px;width:254px;height:28px;background:#4caf50;border-radius:6px"></div>
<svg class="a" style="left:505px;top:649px" width="18" height="18" viewBox="-1.65 -1.45 18 18"><path d="M3.8 2.5 H1.1 Q0 2.5 0 3.6 V14.6 Q0 15.7 1.1 15.7 H6.2" fill="none" stroke="#fff" stroke-width="1.1"/><path d="M8.9 2.5 H11.6 Q12.7 2.5 12.7 3.6 V5.2" fill="none" stroke="#fff" stroke-width="1.1"/><path d="M3.8 2.5 C3.8 0.6 4.9 0 6.35 0 C7.8 0 8.9 0.6 8.9 2.5" fill="none" stroke="#fff" stroke-width="1.1"/><circle cx="6.35" cy="2.3" r="0.75" fill="#fff"/><path d="M2.9 6.4 H6.3 M2.9 9 H5.1 M2.9 11.6 H5.1" stroke="#fff" stroke-width="1.05"/><polygon points="11.05,6.05 12.53,7.90 14.86,8.25 14.00,10.45 14.86,12.65 12.53,13.00 11.05,14.85 9.58,13.00 7.24,12.65 8.10,10.45 7.24,8.25 9.57,7.90" fill="#4caf50" stroke="#fff" stroke-width="1.1" stroke-linejoin="round"/><circle cx="11.05" cy="10.45" r="1.05" fill="#fff"/></svg>
<div class="a" style="left:524px;top:652px;font-size:12.3px;font-weight:normal;color:#fff;letter-spacing:-0.3px;-webkit-text-stroke:0.3px #fff">Zahájit otevírání nabídkové ceny a nákladů</div>
<svg class="a" style="left:769px;top:649px" width="18" height="18" viewBox="-1.55 -1.55 18 18"><path d="M3.8 2.5 H1.1 Q0 2.5 0 3.6 V14.6 Q0 15.7 1.1 15.7 H5.9" fill="none" stroke="#1f72b5" stroke-width="1.1"/><path d="M8.9 2.5 H10.6 Q11.7 2.5 11.7 3.6 V5.2" fill="none" stroke="#1f72b5" stroke-width="1.1"/><path d="M3.8 2.5 C3.8 0.6 4.9 0 6.35 0 C7.8 0 8.9 0.6 8.9 2.5" fill="none" stroke="#1f72b5" stroke-width="1.1"/><circle cx="6.35" cy="2.3" r="0.75" fill="#1f72b5"/><path d="M2.9 6.45 H5.8 M2.9 8.9 H5.8 M2.9 11.35 H4.6" stroke="#1f72b5" stroke-width="1.05"/><circle cx="10.55" cy="10.75" r="4.1" fill="#fff" stroke="#1f72b5" stroke-width="1.1"/><path d="M8.2 10.75 H12.6 M10.9 9 L12.7 10.75 L10.9 12.5" fill="none" stroke="#1f72b5" stroke-width="1.1"/></svg>
<div class="a" style="left:789px;top:652px;font-size:12.6px;font-weight:normal;color:#1f72b5;letter-spacing:-0.1px;">Stáhnout nabídky</div>
<div class="a" style="left:895px;top:649px;width:1px;height:18px;background:#1f72b5;"></div>
<svg class="a" style="left:902px;top:649px" width="18" height="18" viewBox="-1.55 -1.25 18 18"><path d="M3.1 4 V1 Q3.1 0 4.1 0 H11 Q12 0 12 1 V4" fill="none" stroke="#1f72b5" stroke-width="1.1"/><path d="M3.1 11 H1.2 Q0 11 0 9.8 V5.2 Q0 4 1.2 4 H13.7 Q14.9 4 14.9 5.2 V9.8 Q14.9 11 13.7 11 H12" fill="none" stroke="#1f72b5" stroke-width="1.1"/><path d="M3.1 8.2 H12 V14.7 H3.1 Z" fill="#fff" stroke="#1f72b5" stroke-width="1.1" stroke-linejoin="round"/><path d="M4.7 10.6 H9.6 M4.7 12.6 H8.2" stroke="#1f72b5" stroke-width="1"/><path d="M1.8 6.3 H3" stroke="#1f72b5" stroke-width="1"/></svg>
<svg class="a" style="left:923px;top:655px;" width="8" height="7" viewBox="0 0 8 7"><path d="M0.8 0.8 H7.2 L4 6.2 Z" fill="none" stroke="#1f72b5" stroke-width="1.1" stroke-linejoin="round"/></svg>
<div class="a" style="left:942px;top:649px;width:1px;height:18px;background:#1f72b5;"></div>
<svg class="a" style="left:951px;top:648px" width="16" height="18" viewBox="-1.95 -1.55 16 18"><path d="M2.3 4.9 H1 Q0 4.9 0 5.9 V14.7 Q0 15.7 1 15.7 H11.7 Q12.7 15.7 12.7 14.7 V5.9 Q12.7 4.9 11.7 4.9 H9.4" fill="none" stroke="#1f72b5" stroke-width="1.1"/><path d="M6 0.3 V7.6 M3.5 2.6 L6 0.1 L8.5 2.6" fill="none" stroke="#1f72b5" stroke-width="1.1"/></svg>
<svg class="a" style="left:970px;top:655px;" width="8" height="7" viewBox="0 0 8 7"><path d="M0.8 0.8 H7.2 L4 6.2 Z" fill="none" stroke="#1f72b5" stroke-width="1.1" stroke-linejoin="round"/></svg>
<div class="a" style="left:990px;top:649px;width:1px;height:18px;background:#1f72b5;"></div>
<svg class="a" style="left:1320px;top:649px" width="18" height="18" viewBox="-1.05 -1.55 18 18"><path d="M0 0 H15.5 Q15.5 5.6 9.5 7.3 V13.4 L6.3 15.3 V7.3 Q0 5.6 0 0 Z" fill="none" stroke="#1f72b5" stroke-width="1.1" stroke-linejoin="round"/></svg>
<div class="a" style="left:1344px;top:649px;width:1px;height:18px;background:#1f72b5;"></div>
<svg class="a" style="left:1357px;top:655px;" width="8" height="7" viewBox="0 0 8 7"><path d="M0.8 0.8 H7.2 L4 6.2 Z" fill="none" stroke="#1f72b5" stroke-width="1.1" stroke-linejoin="round"/></svg>
<div class="a" style="left:1372px;top:654px;font-size:12.6px;font-weight:normal;color:#1f72b5;">MW</div>
<div class="a" style="left:1402px;top:649px;width:1px;height:18px;background:#1f72b5;z-index:5"></div>
<div class="a" style="left:181px;top:677px;width:1222px;height:37px;background:#f2f2f2;"></div>
<div class="a" style="left:181px;top:677px;width:1222px;height:1px;background:#dcdcdc;"></div>
<div class="a" style="left:181px;top:714px;width:1222px;height:1px;background:#dcdcdc;"></div>
<div class="a" style="left:247px;top:677px;width:1px;height:37px;background:#dcdcdc;"></div>
<div class="a" style="left:327px;top:677px;width:1px;height:37px;background:#dcdcdc;"></div>
<div class="a" style="left:530px;top:677px;width:1px;height:37px;background:#dcdcdc;"></div>
<div class="a" style="left:630px;top:677px;width:1px;height:37px;background:#dcdcdc;"></div>
<div class="a" style="left:780px;top:677px;width:1px;height:37px;background:#dcdcdc;"></div>
<div class="a" style="left:930px;top:677px;width:1px;height:37px;background:#dcdcdc;"></div>
<div class="a" style="left:1070px;top:677px;width:1px;height:37px;background:#dcdcdc;"></div>
<div class="a" style="left:1210px;top:677px;width:1px;height:37px;background:#dcdcdc;"></div>
<div class="a" style="left:1390px;top:677px;width:1px;height:37px;background:#dcdcdc;"></div>
<svg class="a" style="left:205px;top:686px" width="18" height="18" viewBox="-1.00 -1.50 18 18"><rect x="0.3" y="0.3" width="15.4" height="15.4" rx="1.2" fill="none" stroke="#555" stroke-width="1.05"/><path d="M3.2 5.4 H12.6 M3.2 10.4 H12.8" stroke="#555" stroke-width="1"/><ellipse cx="10.8" cy="5.4" rx="1.8" ry="1.3" fill="#f2f2f2" stroke="#555" stroke-width="1"/><ellipse cx="6.9" cy="10.4" rx="1.8" ry="1.3" fill="#f2f2f2" stroke="#555" stroke-width="1"/></svg>
<div class="a" style="left:255px;top:689px;font-size:12.9px;font-weight:bold;color:#111;letter-spacing:-0.5px;">Číslo</div>
<svg class="a" style="left:290px;top:689px;" width="12" height="13" viewBox="0 0 12 13"><path d="M6 12.5 V1.5 M0.8 6.6 L6 1.2 L11.2 6.6" fill="none" stroke="#111" stroke-width="1.05"/></svg>
<svg class="a" style="left:309px;top:691px;" width="8" height="7" viewBox="0 0 8 7"><path d="M0.8 0.8 H7.2 L4 6.2 Z" fill="none" stroke="#555" stroke-width="1.1" stroke-linejoin="round"/></svg>
<div class="a" style="left:335px;top:689px;font-size:12.6px;font-weight:normal;color:#555;letter-spacing:-0.1px;">Název dodavatele</div>
<svg class="a" style="left:513px;top:691px;" width="8" height="7" viewBox="0 0 8 7"><path d="M0.8 0.8 H7.2 L4 6.2 Z" fill="none" stroke="#555" stroke-width="1.1" stroke-linejoin="round"/></svg>
<div class="a" style="left:538px;top:689px;font-size:12.6px;font-weight:normal;color:#555;letter-spacing:-0.1px;">IČO</div>
<svg class="a" style="left:614px;top:691px;" width="8" height="7" viewBox="0 0 8 7"><path d="M0.8 0.8 H7.2 L4 6.2 Z" fill="none" stroke="#555" stroke-width="1.1" stroke-linejoin="round"/></svg>
<div class="a" style="left:638px;top:689px;font-size:12.6px;font-weight:normal;color:#555;letter-spacing:-0.1px;">Datum podání</div>
<svg class="a" style="left:763px;top:691px;" width="8" height="7" viewBox="0 0 8 7"><path d="M0.8 0.8 H7.2 L4 6.2 Z" fill="none" stroke="#555" stroke-width="1.1" stroke-linejoin="round"/></svg>
<div class="a" style="left:788px;top:689px;font-size:12.6px;font-weight:normal;color:#555;letter-spacing:-0.1px;">Stav</div>
<svg class="a" style="left:913px;top:691px;" width="8" height="7" viewBox="0 0 8 7"><path d="M0.8 0.8 H7.2 L4 6.2 Z" fill="none" stroke="#555" stroke-width="1.1" stroke-linejoin="round"/></svg>
<div class="a" style="left:938px;top:689px;font-size:12.6px;font-weight:normal;color:#555;letter-spacing:-0.1px;">Podaná po lhůtě</div>
<svg class="a" style="left:1053px;top:691px;" width="8" height="7" viewBox="0 0 8 7"><path d="M0.8 0.8 H7.2 L4 6.2 Z" fill="none" stroke="#555" stroke-width="1.1" stroke-linejoin="round"/></svg>
<div class="a" style="left:1078px;top:689px;font-size:12.6px;font-weight:normal;color:#555;letter-spacing:-0.1px;">Listinná podoba</div>
<svg class="a" style="left:1194px;top:691px;" width="8" height="7" viewBox="0 0 8 7"><path d="M0.8 0.8 H7.2 L4 6.2 Z" fill="none" stroke="#555" stroke-width="1.1" stroke-linejoin="round"/></svg>
<div class="a" style="left:1218px;top:689px;font-size:12.6px;font-weight:normal;color:#555;letter-spacing:-0.1px;">Označena jako nepodaná</div>
<svg class="a" style="left:1374px;top:691px;" width="8" height="7" viewBox="0 0 8 7"><path d="M0.8 0.8 H7.2 L4 6.2 Z" fill="none" stroke="#555" stroke-width="1.1" stroke-linejoin="round"/></svg>
<div class="a" style="left:1398px;top:689px;font-size:12.6px;font-weight:normal;color:#555;letter-spacing:-0.1px;">V</div>
<div class="a" style="left:181px;top:739px;width:1222px;height:1px;background:#dedede;"></div>
<svg class="a" style="left:191px;top:722px" width="18" height="8" viewBox="-1.95 -1.90 18 8"><rect x="0.3" y="1.3" width="3.5" height="3.3" rx="1.3" fill="none" stroke="#1f72b5" stroke-width="1.1"/><rect x="6.15" y="1.3" width="3.5" height="3.3" rx="1.3" fill="none" stroke="#1f72b5" stroke-width="1.1"/><rect x="12" y="1.3" width="3.5" height="3.3" rx="1.3" fill="none" stroke="#1f72b5" stroke-width="1.1"/><path d="M3.8 2.95 H6.15 M9.65 2.95 H12" stroke="#1f72b5" stroke-width="0.5" opacity="0.6"/></svg>
<svg class="a" style="left:217px;top:717px" width="18" height="18" viewBox="-1.90 -1.90 18 18"><circle cx="8" cy="8" r="7.4" fill="none" stroke="#1f72b5" stroke-width="1.05"/><circle cx="7.6" cy="4.5" r="0.75" fill="#1f72b5"/><path d="M7.4 6.7 Q7.4 10.4 9.5 11.4" fill="none" stroke="#1f72b5" stroke-width="1.1"/></svg>
<div class="a" style="left:255px;top:721px;font-size:13px;font-weight:normal;color:#222;letter-spacing:-0.15px;">001</div>
<div class="a" style="left:335px;top:721px;font-size:13px;font-weight:normal;color:#222;letter-spacing:-0.15px;">Dodavatel - školení 2</div>
<div class="a" style="left:538px;top:721px;font-size:13px;font-weight:normal;color:#222;letter-spacing:-0.15px;">12345678</div>
<div class="a" style="left:639px;top:721px;font-size:13px;font-weight:normal;color:#222;letter-spacing:-0.15px;">6. 6. 2025 22:36</div>
<div class="a" style="left:789px;top:721px;font-size:13px;font-weight:normal;color:#222;letter-spacing:-0.15px;">Otevřeno</div>
<svg class="a" style="left:996px;top:721.0px;" width="10" height="10" viewBox="0 0 10 10"><path d="M1.8 1.8 L8.2 8.2 M8.2 1.8 L1.8 8.2" stroke="#d0282c" stroke-width="2" stroke-linecap="round"/></svg>
<svg class="a" style="left:1136.5px;top:721.0px;" width="10" height="10" viewBox="0 0 10 10"><path d="M1.8 1.8 L8.2 8.2 M8.2 1.8 L1.8 8.2" stroke="#d0282c" stroke-width="2" stroke-linecap="round"/></svg>
<svg class="a" style="left:1296.5px;top:721.0px;" width="10" height="10" viewBox="0 0 10 10"><path d="M1.8 1.8 L8.2 8.2 M8.2 1.8 L1.8 8.2" stroke="#d0282c" stroke-width="2" stroke-linecap="round"/></svg>
<div class="a" style="left:181px;top:764px;width:1222px;height:1px;background:#dedede;"></div>
<svg class="a" style="left:191px;top:747px" width="18" height="8" viewBox="-1.95 -1.90 18 8"><rect x="0.3" y="1.3" width="3.5" height="3.3" rx="1.3" fill="none" stroke="#1f72b5" stroke-width="1.1"/><rect x="6.15" y="1.3" width="3.5" height="3.3" rx="1.3" fill="none" stroke="#1f72b5" stroke-width="1.1"/><rect x="12" y="1.3" width="3.5" height="3.3" rx="1.3" fill="none" stroke="#1f72b5" stroke-width="1.1"/><path d="M3.8 2.95 H6.15 M9.65 2.95 H12" stroke="#1f72b5" stroke-width="0.5" opacity="0.6"/></svg>
<svg class="a" style="left:217px;top:742px" width="18" height="18" viewBox="-1.90 -1.90 18 18"><circle cx="8" cy="8" r="7.4" fill="none" stroke="#1f72b5" stroke-width="1.05"/><circle cx="7.6" cy="4.5" r="0.75" fill="#1f72b5"/><path d="M7.4 6.7 Q7.4 10.4 9.5 11.4" fill="none" stroke="#1f72b5" stroke-width="1.1"/></svg>
<div class="a" style="left:255px;top:746px;font-size:13px;font-weight:normal;color:#222;letter-spacing:-0.15px;">002</div>
<div class="a" style="left:335px;top:746px;font-size:13px;font-weight:normal;color:#222;letter-spacing:-0.15px;">Dodavatel - školení 3</div>
<div class="a" style="left:538px;top:746px;font-size:13px;font-weight:normal;color:#222;letter-spacing:-0.15px;">12345678</div>
<div class="a" style="left:639px;top:746px;font-size:13px;font-weight:normal;color:#222;letter-spacing:-0.15px;">6. 6. 2025 22:37</div>
<div class="a" style="left:789px;top:746px;font-size:13px;font-weight:normal;color:#222;letter-spacing:-0.15px;">Otevřeno</div>
<svg class="a" style="left:996px;top:746.0px;" width="10" height="10" viewBox="0 0 10 10"><path d="M1.8 1.8 L8.2 8.2 M8.2 1.8 L1.8 8.2" stroke="#d0282c" stroke-width="2" stroke-linecap="round"/></svg>
<svg class="a" style="left:1136.5px;top:746.0px;" width="10" height="10" viewBox="0 0 10 10"><path d="M1.8 1.8 L8.2 8.2 M8.2 1.8 L1.8 8.2" stroke="#d0282c" stroke-width="2" stroke-linecap="round"/></svg>
<svg class="a" style="left:1296.5px;top:746.0px;" width="10" height="10" viewBox="0 0 10 10"><path d="M1.8 1.8 L8.2 8.2 M8.2 1.8 L1.8 8.2" stroke="#d0282c" stroke-width="2" stroke-linecap="round"/></svg>
<div class="a" style="left:181px;top:789px;width:1222px;height:1px;background:#dedede;"></div>
<svg class="a" style="left:191px;top:772px" width="18" height="8" viewBox="-1.95 -1.90 18 8"><rect x="0.3" y="1.3" width="3.5" height="3.3" rx="1.3" fill="none" stroke="#1f72b5" stroke-width="1.1"/><rect x="6.15" y="1.3" width="3.5" height="3.3" rx="1.3" fill="none" stroke="#1f72b5" stroke-width="1.1"/><rect x="12" y="1.3" width="3.5" height="3.3" rx="1.3" fill="none" stroke="#1f72b5" stroke-width="1.1"/><path d="M3.8 2.95 H6.15 M9.65 2.95 H12" stroke="#1f72b5" stroke-width="0.5" opacity="0.6"/></svg>
<svg class="a" style="left:217px;top:767px" width="18" height="18" viewBox="-1.90 -1.90 18 18"><circle cx="8" cy="8" r="7.4" fill="none" stroke="#1f72b5" stroke-width="1.05"/><circle cx="7.6" cy="4.5" r="0.75" fill="#1f72b5"/><path d="M7.4 6.7 Q7.4 10.4 9.5 11.4" fill="none" stroke="#1f72b5" stroke-width="1.1"/></svg>
<div class="a" style="left:255px;top:771px;font-size:13px;font-weight:normal;color:#222;letter-spacing:-0.15px;">003</div>
<div class="a" style="left:335px;top:771px;font-size:13px;font-weight:normal;color:#222;letter-spacing:-0.15px;">Dodavatel - školení 4</div>
<div class="a" style="left:538px;top:771px;font-size:13px;font-weight:normal;color:#222;letter-spacing:-0.15px;">12345678</div>
<div class="a" style="left:639px;top:771px;font-size:13px;font-weight:normal;color:#222;letter-spacing:-0.15px;">6. 6. 2025 22:39</div>
<div class="a" style="left:789px;top:771px;font-size:13px;font-weight:normal;color:#222;letter-spacing:-0.15px;">Otevřeno</div>
<svg class="a" style="left:996px;top:771.0px;" width="10" height="10" viewBox="0 0 10 10"><path d="M1.8 1.8 L8.2 8.2 M8.2 1.8 L1.8 8.2" stroke="#d0282c" stroke-width="2" stroke-linecap="round"/></svg>
<svg class="a" style="left:1136.5px;top:771.0px;" width="10" height="10" viewBox="0 0 10 10"><path d="M1.8 1.8 L8.2 8.2 M8.2 1.8 L1.8 8.2" stroke="#d0282c" stroke-width="2" stroke-linecap="round"/></svg>
<svg class="a" style="left:1296.5px;top:771.0px;" width="10" height="10" viewBox="0 0 10 10"><path d="M1.8 1.8 L8.2 8.2 M8.2 1.8 L1.8 8.2" stroke="#d0282c" stroke-width="2" stroke-linecap="round"/></svg>
<div class="a" style="left:181px;top:814px;width:1222px;height:1px;background:#dedede;"></div>
<svg class="a" style="left:191px;top:797px" width="18" height="8" viewBox="-1.95 -1.90 18 8"><rect x="0.3" y="1.3" width="3.5" height="3.3" rx="1.3" fill="none" stroke="#1f72b5" stroke-width="1.1"/><rect x="6.15" y="1.3" width="3.5" height="3.3" rx="1.3" fill="none" stroke="#1f72b5" stroke-width="1.1"/><rect x="12" y="1.3" width="3.5" height="3.3" rx="1.3" fill="none" stroke="#1f72b5" stroke-width="1.1"/><path d="M3.8 2.95 H6.15 M9.65 2.95 H12" stroke="#1f72b5" stroke-width="0.5" opacity="0.6"/></svg>
<svg class="a" style="left:217px;top:792px" width="18" height="18" viewBox="-1.90 -1.90 18 18"><circle cx="8" cy="8" r="7.4" fill="none" stroke="#1f72b5" stroke-width="1.05"/><circle cx="7.6" cy="4.5" r="0.75" fill="#1f72b5"/><path d="M7.4 6.7 Q7.4 10.4 9.5 11.4" fill="none" stroke="#1f72b5" stroke-width="1.1"/></svg>
<div class="a" style="left:255px;top:796px;font-size:13px;font-weight:normal;color:#222;letter-spacing:-0.15px;">004</div>
<div class="a" style="left:335px;top:796px;font-size:13px;font-weight:normal;color:#222;letter-spacing:-0.15px;">Dodavatel - školení 5</div>
<div class="a" style="left:538px;top:796px;font-size:13px;font-weight:normal;color:#222;letter-spacing:-0.15px;">12345678</div>
<div class="a" style="left:639px;top:796px;font-size:13px;font-weight:normal;color:#222;letter-spacing:-0.15px;">6. 6. 2025 22:40</div>
<div class="a" style="left:789px;top:796px;font-size:13px;font-weight:normal;color:#222;letter-spacing:-0.15px;">Otevřeno</div>
<svg class="a" style="left:996px;top:796.0px;" width="10" height="10" viewBox="0 0 10 10"><path d="M1.8 1.8 L8.2 8.2 M8.2 1.8 L1.8 8.2" stroke="#d0282c" stroke-width="2" stroke-linecap="round"/></svg>
<svg class="a" style="left:1136.5px;top:796.0px;" width="10" height="10" viewBox="0 0 10 10"><path d="M1.8 1.8 L8.2 8.2 M8.2 1.8 L1.8 8.2" stroke="#d0282c" stroke-width="2" stroke-linecap="round"/></svg>
<svg class="a" style="left:1296.5px;top:796.0px;" width="10" height="10" viewBox="0 0 10 10"><path d="M1.8 1.8 L8.2 8.2 M8.2 1.8 L1.8 8.2" stroke="#d0282c" stroke-width="2" stroke-linecap="round"/></svg>
<div class="a" style="left:1335px;top:677px;width:68px;height:138px;background:linear-gradient(to right,rgba(210,210,210,0),rgba(210,210,210,.5))"></div>
<div class="a" style="left:181px;top:815px;width:1222px;height:12px;background:#f0f0f0;"></div>
<div class="a" style="left:183px;top:817px;width:1094px;height:8px;background:#c1c1c1;border-radius:4px"></div>
<div class="a" style="left:178px;top:635px;width:1228px;height:195px;border:3px solid #e1e2e3;border-radius:10px;"></div>
<div class="a" style="left:310px;top:636px;width:177px;height:41px;border:1px solid #e0242f"></div>
</body></html>
